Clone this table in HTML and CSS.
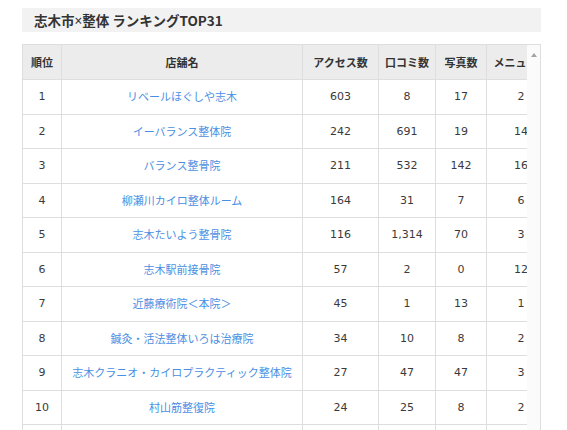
FILE: index.html
```html
<!DOCTYPE html>
<html lang="ja">
<head>
<meta charset="utf-8">
<title>志木市×整体 ランキングTOP31</title>
<link rel="stylesheet" href="styles.css">
</head>
<body>
<div class="page">
  <h2 class="title">志木市<span class="times">×</span>整体 ランキングTOP31</h2>
  <div class="table-wrap">
    <div class="scroll-area">
      <table class="rank">
        <colgroup>
          <col class="c-rank"><col class="c-name"><col class="c-access"><col class="c-review"><col class="c-photo"><col class="c-menu">
        </colgroup>
        <thead>
          <tr><th>順位</th><th>店舗名</th><th>アクセス数</th><th>口コミ数</th><th>写真数</th><th>メニュー数</th></tr>
        </thead>
        <tbody>
          <tr><td>1</td><td class="name"><a href="#">リベールほぐしや志木</a></td><td>603</td><td>8</td><td>17</td><td>2</td></tr>
          <tr><td>2</td><td class="name"><a href="#">イーバランス整体院</a></td><td>242</td><td>691</td><td>19</td><td>14</td></tr>
          <tr><td>3</td><td class="name"><a href="#">バランス整骨院</a></td><td>211</td><td>532</td><td>142</td><td>16</td></tr>
          <tr><td>4</td><td class="name"><a href="#">柳瀬川カイロ整体ルーム</a></td><td>164</td><td>31</td><td>7</td><td>6</td></tr>
          <tr><td>5</td><td class="name"><a href="#">志木たいよう整骨院</a></td><td>116</td><td>1,314</td><td>70</td><td>3</td></tr>
          <tr><td>6</td><td class="name"><a href="#">志木駅前接骨院</a></td><td>57</td><td>2</td><td>0</td><td>12</td></tr>
          <tr><td>7</td><td class="name"><a href="#">近藤療術院＜本院＞</a></td><td>45</td><td>1</td><td>13</td><td>1</td></tr>
          <tr><td>8</td><td class="name"><a href="#">鍼灸・活法整体いろは治療院</a></td><td>34</td><td>10</td><td>8</td><td>2</td></tr>
          <tr><td>9</td><td class="name"><a href="#">志木クラニオ・カイロプラクティック整体院</a></td><td>27</td><td>47</td><td>47</td><td>3</td></tr>
          <tr><td>10</td><td class="name"><a href="#">村山筋整復院</a></td><td>24</td><td>25</td><td>8</td><td>2</td></tr>
          <tr class="more"><td></td><td></td><td></td><td></td><td></td><td></td></tr>
        </tbody>
      </table>
    </div>
    <div class="vscroll"><span class="arrow-up"></span></div>
  </div>
</div>
</body>
</html>
```
FILE: styles.css
```css
html, body {
  margin: 0;
  padding: 0;
  background: #ffffff;
}
body {
  font-family: "Noto Sans CJK JP", "Noto Sans", sans-serif;
  color: #333333;
  overflow: hidden;
  height: 430px;
}
.page {
  width: 519px;
  padding: 8px 0 0 22px;
  display: flex;
  flex-direction: column;
  gap: 12px;
}
.title {
  margin: 0;
  height: 24px;
  line-height: 24px;
  background: #f2f2f2;
  padding-left: 12px;
  font-size: 13.5px;
  font-weight: bold;
  color: #333333;
}
.times {
  font-family: "Noto Sans", sans-serif;
  font-weight: normal;
}
.table-wrap {
  display: flex;
  border: 1px solid #dedede;
  height: 420px;
  overflow: hidden;
}
.scroll-area {
  width: 504px;
  flex: none;
  overflow: hidden;
}
.rank {
  border-collapse: separate;
  border-spacing: 0;
  table-layout: fixed;
  width: 533px;
  font-size: 11px;
}
.c-rank { width: 39px; }
.c-name { width: 241px; }
.c-access { width: 76px; }
.c-review { width: 57px; }
.c-photo { width: 51px; }
.c-menu { width: 69px; }
.rank th,
.rank td {
  box-sizing: border-box;
  text-align: center;
  white-space: nowrap;
  overflow: hidden;
  border-right: 1px solid #dedede;
  border-bottom: 1px solid #dedede;
  padding: 8px 0;
}
.rank th {
  background: #ececec;
  font-weight: bold;
  line-height: 18px;
  color: #333333;
}
.rank td {
  line-height: 17.5px;
  color: #3a3a3a;
  font-family: "DejaVu Sans", "Noto Sans CJK JP", sans-serif;
}
.rank td.name {
  font-family: "Noto Sans CJK JP", sans-serif;
}
.rank .more td {
  height: 34.5px;
}
.rank td a {
  color: #4a8fe3;
  text-decoration: none;
}
.vscroll {
  flex: 1;
  background: #fbfbfb;
  display: flex;
  justify-content: center;
  padding-top: 8px;
}
.arrow-up {
  width: 0;
  height: 0;
  border-left: 3.5px solid transparent;
  border-right: 3.5px solid transparent;
  border-bottom: 4px solid #a3a3a3;
}
```
